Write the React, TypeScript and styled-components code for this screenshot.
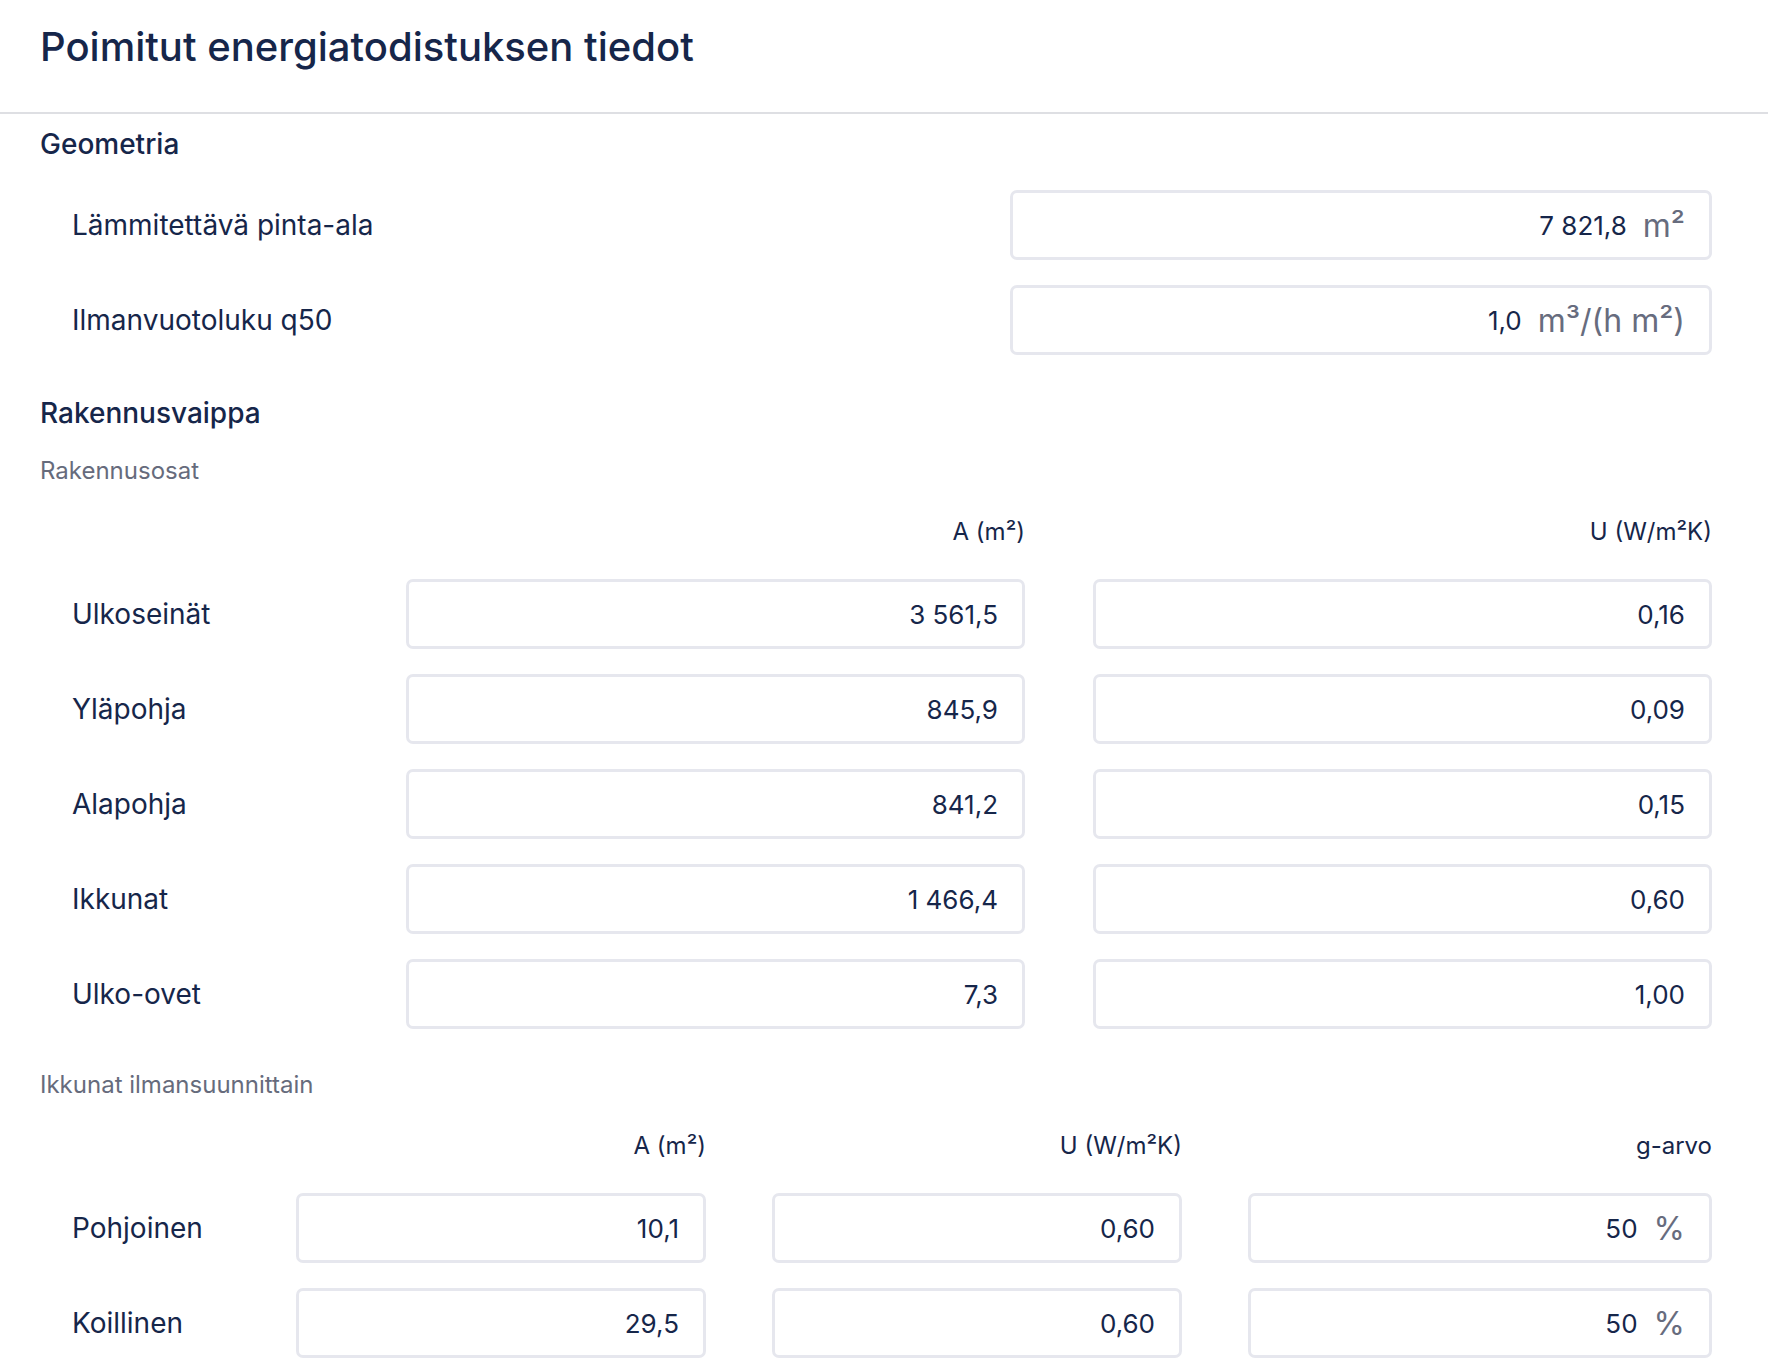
import styled, { createGlobalStyle } from "styled-components";

const GlobalStyle = createGlobalStyle`
  html, body {
    margin: 0;
    padding: 0;
    background: #ffffff;
  }
  body {
    font-family: Inter, "Noto Sans", "Liberation Sans", sans-serif;
    color: #16264a;
  }
`;

const geometry = [
  { label: "Lämmitettävä pinta-ala", value: "7 821,8", unit: "m²" },
  { label: "Ilmanvuotoluku q50", value: "1,0", unit: "m³/(h m²)" },
];

const parts = [
  { label: "Ulkoseinät", a: "3 561,5", u: "0,16" },
  { label: "Yläpohja", a: "845,9", u: "0,09" },
  { label: "Alapohja", a: "841,2", u: "0,15" },
  { label: "Ikkunat", a: "1 466,4", u: "0,60" },
  { label: "Ulko-ovet", a: "7,3", u: "1,00" },
];

const windows = [
  { label: "Pohjoinen", a: "10,1", u: "0,60", g: "50" },
  { label: "Koillinen", a: "29,5", u: "0,60", g: "50" },
];

const App = () => {
  return (
    <Page>
      <GlobalStyle />
      <Header>
        <h1>Poimitut energiatodistuksen tiedot</h1>
      </Header>
      <Content>
        <SectionTitle>Geometria</SectionTitle>
        <FieldList>
          {geometry.map((f) => (
            <FieldRow key={f.label}>
              <RowLabel>{f.label}</RowLabel>
              <ValueBox $width="702px">
                <span>{f.value}</span>
                <Unit>{f.unit}</Unit>
              </ValueBox>
            </FieldRow>
          ))}
        </FieldList>

        <SectionTitle $top="42px">Rakennusvaippa</SectionTitle>
        <SubTitle>Rakennusosat</SubTitle>
        <Grid $cols="298px 1fr 1fr" $gap="68px" $top="32px">
          <span />
          <ColHead>A (m²)</ColHead>
          <ColHead>U (W/m²K)</ColHead>
          {parts.map((p) => (
            <Row key={p.label}>
              <RowLabel>{p.label}</RowLabel>
              <ValueBox>{p.a}</ValueBox>
              <ValueBox>{p.u}</ValueBox>
            </Row>
          ))}
        </Grid>

        <SubTitle $top="42px">Ikkunat ilmansuunnittain</SubTitle>
        <Grid $cols="190px 410px 410px 1fr" $gap="66px" $top="32px">
          <span />
          <ColHead>A (m²)</ColHead>
          <ColHead>U (W/m²K)</ColHead>
          <ColHead>g-arvo</ColHead>
          {windows.map((w) => (
            <Row key={w.label}>
              <RowLabel>{w.label}</RowLabel>
              <ValueBox>{w.a}</ValueBox>
              <ValueBox>{w.u}</ValueBox>
              <ValueBox>
                <span>{w.g}</span>
                <Unit>%</Unit>
              </ValueBox>
            </Row>
          ))}
        </Grid>
      </Content>
    </Page>
  );
};

export default App;

const Page = styled.div`
  width: 1768px;
  min-height: 1370px;
  box-sizing: border-box;
`;

const Header = styled.header`
  height: 114px;
  box-sizing: border-box;
  padding: 24px 40px 0;
  border-bottom: 2px solid #dedfe3;

  & h1 {
    margin: 0;
    font-size: 40px;
    line-height: 46px;
    font-weight: 500;
    color: #16264a;
  }
`;

const Content = styled.main`
  padding: 14px 56px 0 40px;
`;

const SectionTitle = styled.h2<{ $top?: string }>`
  margin: ${(p) => p.$top || "0"} 0 0;
  font-size: 28px;
  line-height: 32px;
  font-weight: 500;
  color: #16264a;
`;

const SubTitle = styled.h3<{ $top?: string }>`
  margin: ${(p) => p.$top || "28px"} 0 0;
  font-size: 24px;
  line-height: 28px;
  font-weight: 400;
  color: #666b7c;
`;

const FieldList = styled.div`
  display: flex;
  flex-direction: column;
  gap: 25px;
  margin-top: 30px;
`;

const FieldRow = styled.div`
  display: flex;
  align-items: center;
  justify-content: space-between;
  height: 70px;
`;

const RowLabel = styled.span`
  padding-left: 32px;
  font-size: 28px;
  color: #16264a;
`;

const ValueBox = styled.div<{ $width?: string }>`
  width: ${(p) => p.$width || "auto"};
  height: 70px;
  box-sizing: border-box;
  border: 3px solid #e6e7ee;
  border-radius: 7px;
  padding: 0 24px 0 16px;
  display: flex;
  align-items: center;
  justify-content: flex-end;
  gap: 16px;
  font-size: 26px;
  color: #16264a;
  background: #fff;
`;

const Unit = styled.span`
  font-size: 32px;
  color: #676c7e;
`;

const Grid = styled.div<{ $cols: string; $gap: string; $top: string }>`
  display: grid;
  grid-template-columns: ${(p) => p.$cols};
  column-gap: ${(p) => p.$gap};
  row-gap: 25px;
  margin-top: ${(p) => p.$top};
  align-items: center;
`;

const Row = styled.div`
  display: contents;
`;

const ColHead = styled.span`
  justify-self: end;
  font-size: 24px;
  line-height: 30px;
  color: #16264a;
  margin-bottom: 7px;
`;
